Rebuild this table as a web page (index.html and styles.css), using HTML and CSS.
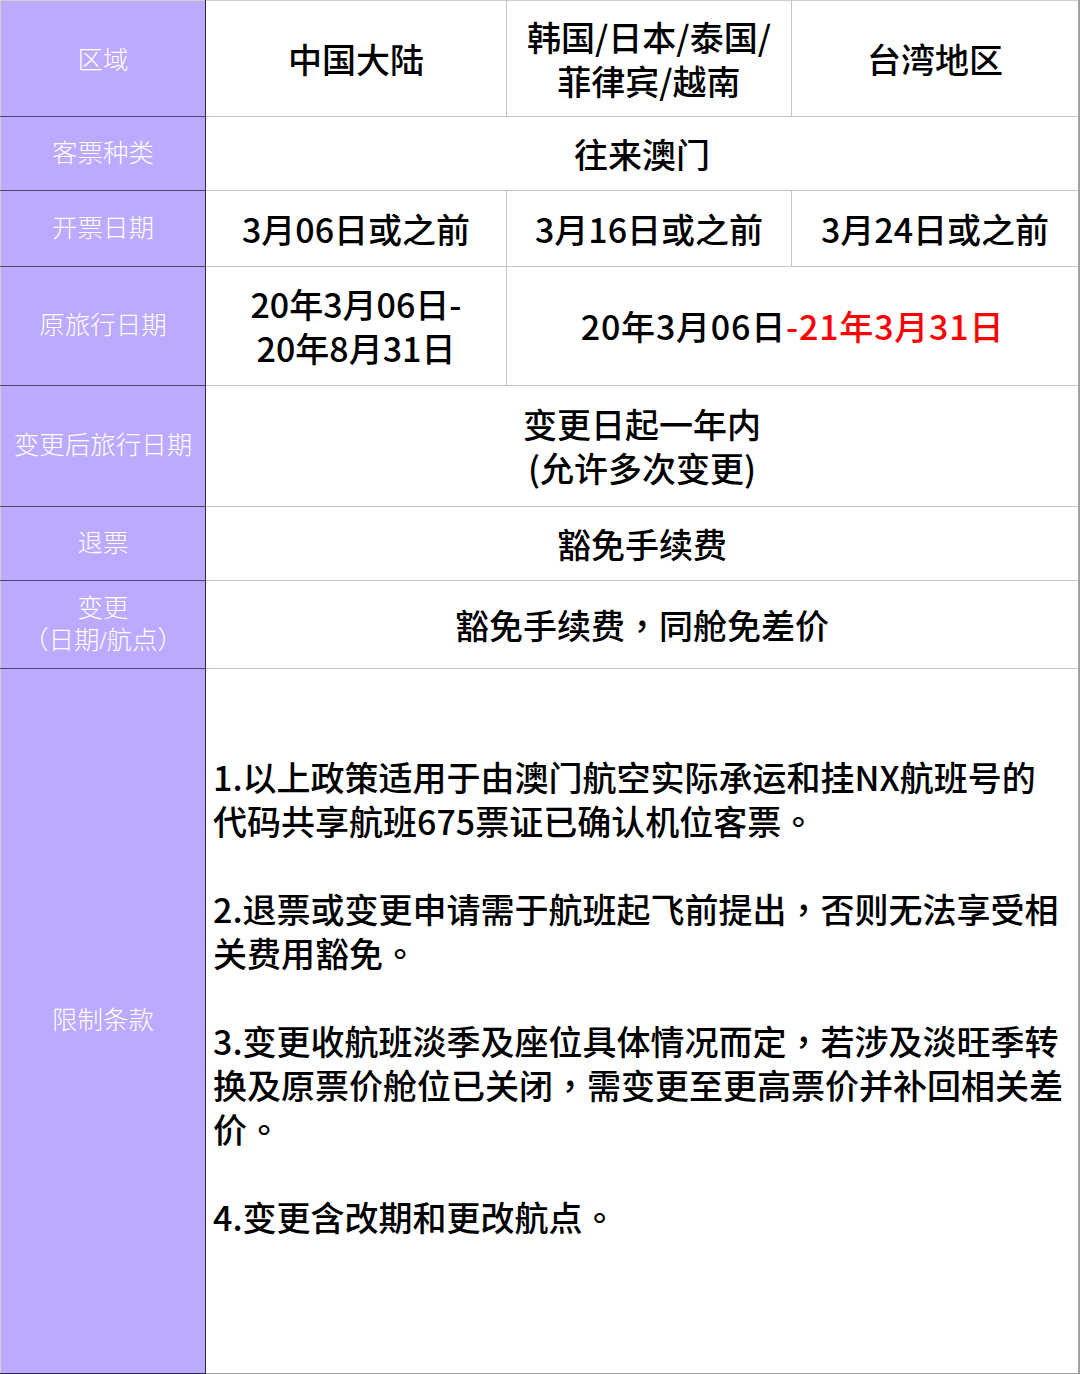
FILE: index.html
```html
<!DOCTYPE html>
<html lang="zh-CN">
<head>
<meta charset="utf-8">
<title>澳门航空 退改政策</title>
<link rel="stylesheet" href="styles.css">
</head>
<body>
<table class="policy">
  <colgroup>
    <col class="c-label">
    <col class="c-a">
    <col class="c-b">
    <col class="c-c">
  </colgroup>
  <tr class="r1">
    <th>区域</th>
    <td>中国大陆</td>
    <td>韩国/日本/泰国/<br>菲律宾/越南</td>
    <td>台湾地区</td>
  </tr>
  <tr class="r2">
    <th>客票种类</th>
    <td colspan="3">往来澳门</td>
  </tr>
  <tr class="r3">
    <th>开票日期</th>
    <td>3月06日或之前</td>
    <td>3月16日或之前</td>
    <td>3月24日或之前</td>
  </tr>
  <tr class="r4">
    <th>原旅行日期</th>
    <td>20年3月06日-<br>20年8月31日</td>
    <td colspan="2" class="wide">20年3月06日<span class="red">-21年3月31日</span></td>
  </tr>
  <tr class="r5">
    <th>变更后旅行日期</th>
    <td colspan="3">变更日起一年内<br>(允许多次变更)</td>
  </tr>
  <tr class="r6">
    <th>退票</th>
    <td colspan="3">豁免手续费</td>
  </tr>
  <tr class="r7">
    <th>变更<br>（日期/航点）</th>
    <td colspan="3">豁免手续费<span class="pn" lang="zh-TW">，</span>同舱免差价</td>
  </tr>
  <tr class="r8">
    <th>限制条款</th>
    <td colspan="3" class="terms">
      <p>1.以上政策适用于由澳门航空实际承运和挂NX航班号的<br>代码共享航班675票证已确认机位客票<span class="pn" lang="zh-TW">。</span></p>
      <p>2.退票或变更申请需于航班起飞前提出<span class="pn" lang="zh-TW">，</span>否则无法享受相<br>关费用豁免<span class="pn" lang="zh-TW">。</span></p>
      <p>3.变更收航班淡季及座位具体情况而定<span class="pn" lang="zh-TW">，</span>若涉及淡旺季转<br>换及原票价舱位已关闭<span class="pn" lang="zh-TW">，</span>需变更至更高票价并补回相关差<br>价<span class="pn" lang="zh-TW">。</span></p>
      <p>4.变更含改期和更改航点<span class="pn" lang="zh-TW">。</span></p>
    </td>
  </tr>
</table>
</body>
</html>
```

FILE: styles.css
```css
html, body {
  margin: 0;
  padding: 0;
  background: #ffffff;
}

.policy {
  width: 1080px;
  border-collapse: collapse;
  table-layout: fixed;
  border-top: 1px solid #cfcfcf;
  border-left: 1px solid #cfcfcf;
  border-right: 2px solid #a0a0a0;
  border-bottom: 2px solid #a0a0a0;
}

.c-label { width: 205px; }
.c-a { width: 301px; }
.c-b { width: 285px; }
.c-c { width: auto; }

.policy th {
  background: #bbaaff;
  color: #ffffff;
  font-family: "Liberation Serif", "Noto Sans CJK SC", serif;
  font-weight: 300;
  font-size: 25.5px;
  line-height: 32px;
  text-align: center;
  vertical-align: middle;
  padding: 0;
  border-bottom: 1px solid #4a4560;
  border-right: 1px solid #2a2540;
}

.policy td {
  color: #000000;
  font-family: "Noto Sans CJK SC", sans-serif;
  font-weight: 500;
  font-size: 34px;
  line-height: 44px;
  text-align: center;
  vertical-align: middle;
  padding: 0;
  border-bottom: 1px solid #c4c4c4;
  border-left: 1px solid #c4c4c4;
}

.policy td.wide {
  letter-spacing: 0.8px;
}

.pn {
  font-family: "Noto Sans CJK TC", "Noto Sans CJK SC", sans-serif;
}

.r1 { height: 116px; }
.r2 { height: 74px; }
.r3 { height: 76px; }
.r4 { height: 119px; }
.r5 { height: 121px; }
.r6 { height: 74px; }
.r7 { height: 88px; }
.r8 { height: 705px; }

.r1 th { padding-top: 4px; }

.policy .r8 th {
  border-bottom: 2px solid #2a2540;
}

.red {
  color: #ff0000;
}

.policy td.terms {
  text-align: left;
  vertical-align: top;
  font-size: 34px;
  line-height: 44px;
  padding: 86px 0 0 7px;
  white-space: nowrap;
}

.terms p {
  margin: 0 0 44px 0;
}
```
